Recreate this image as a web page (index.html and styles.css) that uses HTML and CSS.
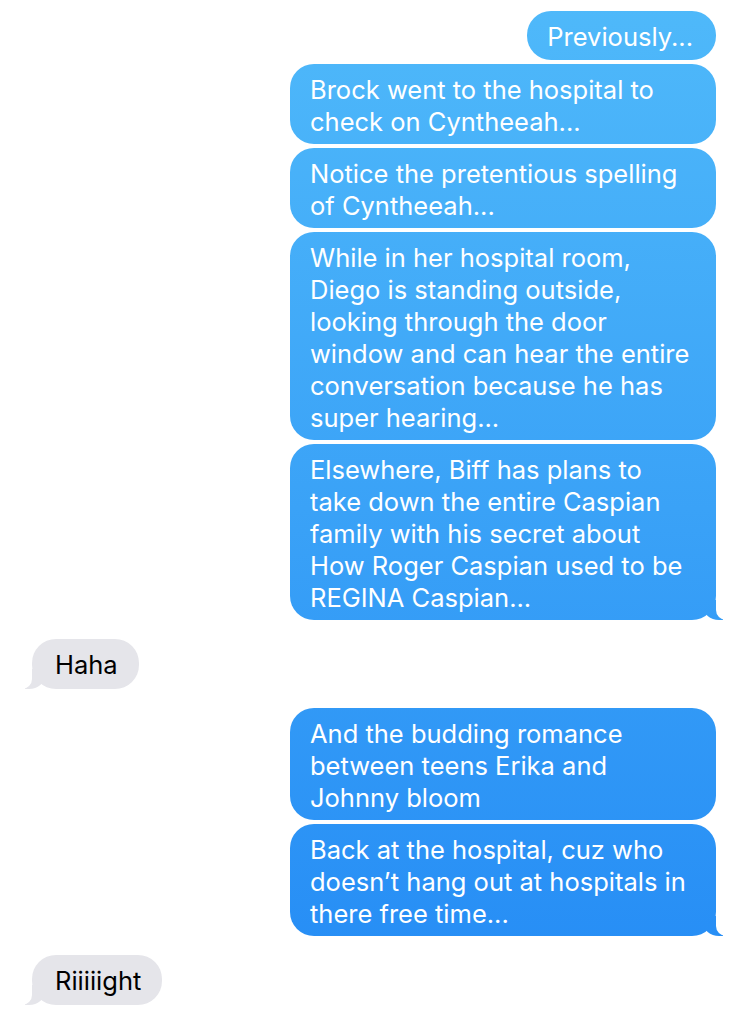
FILE: index.html
```html
<!DOCTYPE html>
<html>
<head>
<meta charset="utf-8">
<link rel="stylesheet" href="styles.css">
</head>
<body>
<div class="thread">
  <div class="group me">
    <div class="bubble single">Previously...</div>
    <div class="bubble wide">Brock went to the hospital to<br>check on Cyntheeah...</div>
    <div class="bubble wide">Notice the pretentious spelling<br>of Cyntheeah...</div>
    <div class="bubble wide">While in her hospital room,<br>Diego is standing outside,<br>looking through the door<br>window and can hear the entire<br>conversation because he has<br>super hearing...</div>
    <div class="bubble wide tail">Elsewhere, Biff has plans to<br>take down the entire Caspian<br>family with his secret about<br>How Roger Caspian used to be<br>REGINA Caspian...</div>
  </div>
  <div class="group them">
    <div class="bubble single tail">Haha</div>
  </div>
  <div class="group me">
    <div class="bubble wide">And the budding romance<br>between teens Erika and<br>Johnny bloom</div>
    <div class="bubble wide tail">Back at the hospital, cuz who<br>doesn’t hang out at hospitals in<br>there free time...</div>
  </div>
  <div class="group them">
    <div class="bubble single tail">Riiiiight</div>
  </div>
</div>
</body>
</html>
```

FILE: styles.css
```css
html, body {
  margin: 0;
  padding: 0;
  background: #ffffff;
}

.thread {
  padding: 11px 32px 0 32px;
  display: flex;
  flex-direction: column;
  gap: 19px;
  font-family: "Inter", "Liberation Sans", sans-serif;
  font-size: 25.5px;
  line-height: 32px;
}

.group {
  display: flex;
  flex-direction: column;
  gap: 4px;
}

.group.me {
  align-items: flex-end;
}

.group.them {
  align-items: flex-start;
}

.bubble {
  position: relative;
  box-sizing: border-box;
  border-radius: 24px;
  padding: 10px 23px 6px 20px;
  white-space: nowrap;
}

.bubble.single {
  min-height: 49px;
  padding-top: 10px;
  padding-bottom: 7px;
}

.them .bubble.single {
  min-height: 50px;
}

.bubble.wide {
  width: 426px;
}

.me .bubble {
  color: #ffffff;
  background: linear-gradient(180deg, #4fb9fa 0%, #3aa2f7 50%, #248bf5 100%) fixed;
}

.them .bubble {
  color: #000000;
  background: #e5e5ea;
  padding-left: 23px;
  padding-right: 21px;
}

.bubble.tail::before,
.bubble.tail::after {
  content: "";
  position: absolute;
  bottom: 0;
  height: 20px;
}

.me .bubble.tail::before {
  right: -7px;
  width: 20px;
  background: linear-gradient(180deg, #4fb9fa 0%, #3aa2f7 50%, #248bf5 100%) fixed;
  border-bottom-left-radius: 16px 14px;
}

.me .bubble.tail::after {
  right: -26px;
  width: 26px;
  background: #ffffff;
  border-bottom-left-radius: 10px;
}

.them .bubble.tail::before {
  left: -7px;
  width: 20px;
  background: #e5e5ea;
  border-bottom-right-radius: 16px 14px;
}

.them .bubble.tail::after {
  left: -26px;
  width: 26px;
  background: #ffffff;
  border-bottom-right-radius: 10px;
}
```
